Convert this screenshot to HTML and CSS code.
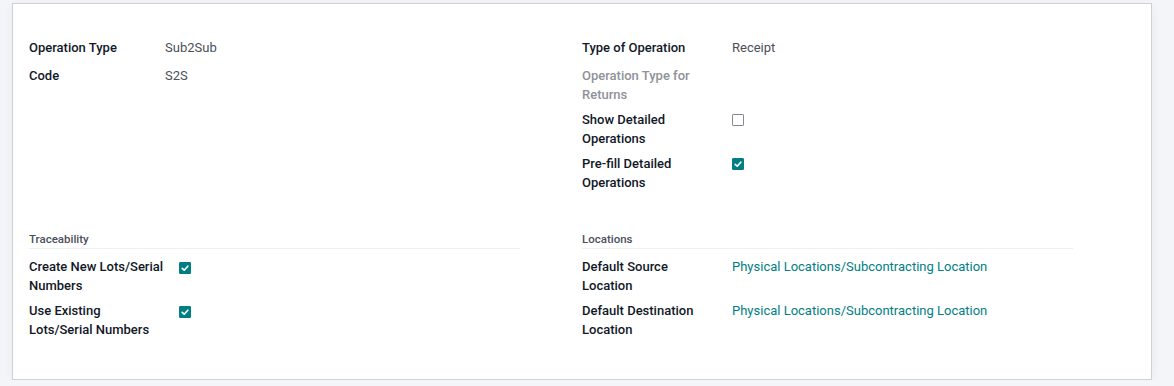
FILE: index.html
```html
<!doctype html>
<html lang="en">
    <head>
        <meta charset="UTF-8" />
        <title>Sub2Sub - Operation Type</title>
        <link rel="stylesheet" href="styles.css">
    </head>
    <body>
        <div class="sheet">
            <div class="group">
                <div class="inner-group left">
                    <div class="row">
                        <div class="label">Operation Type</div>
                        <div class="value">Sub2Sub</div>
                    </div>
                    <div class="row">
                        <div class="label">Code</div>
                        <div class="value">S2S</div>
                    </div>
                </div>
                <div class="inner-group right">
                    <div class="row">
                        <div class="label">Type of Operation</div>
                        <div class="value">Receipt</div>
                    </div>
                    <div class="row">
                        <div class="label muted">Operation Type for Returns</div>
                        <div class="value"></div>
                    </div>
                    <div class="row">
                        <div class="label">Show Detailed Operations</div>
                        <div class="value"><span class="check"></span></div>
                    </div>
                    <div class="row">
                        <div class="label">Pre-fill Detailed Operations</div>
                        <div class="value">
                            <span class="check checked">
                                <svg viewBox="0 0 12 12"><polyline points="3.2,6.4 5.2,8.2 8.8,4.2" /></svg>
                            </span>
                        </div>
                    </div>
                </div>
            </div>

            <div class="group second">
                <div class="inner-group left">
                    <div class="separator">Traceability</div>
                    <div class="row">
                        <div class="label">Create New Lots/Serial Numbers</div>
                        <div class="value">
                            <span class="check checked">
                                <svg viewBox="0 0 12 12"><polyline points="3.2,6.4 5.2,8.2 8.8,4.2" /></svg>
                            </span>
                        </div>
                    </div>
                    <div class="row">
                        <div class="label">Use Existing Lots/Serial Numbers</div>
                        <div class="value">
                            <span class="check checked">
                                <svg viewBox="0 0 12 12"><polyline points="3.2,6.4 5.2,8.2 8.8,4.2" /></svg>
                            </span>
                        </div>
                    </div>
                </div>
                <div class="inner-group right">
                    <div class="separator">Locations</div>
                    <div class="row">
                        <div class="label">Default Source Location</div>
                        <div class="value"><a class="link" href="#">Physical Locations/Subcontracting Location</a></div>
                    </div>
                    <div class="row">
                        <div class="label">Default Destination Location</div>
                        <div class="value"><a class="link" href="#">Physical Locations/Subcontracting Location</a></div>
                    </div>
                </div>
            </div>
        </div>
    </body>
</html>
```

FILE: styles.css
```css
body {
    margin: 0;
    padding: 3px 0 0 12px;
    background-color: #f4f5f8;
    font-family: Roboto, "Liberation Sans", sans-serif;
    font-size: 13px;
    line-height: 19px;
    color: #374151;
}
.sheet {
    box-sizing: border-box;
    width: 1140px;
    height: 377px;
    padding: 34px 16px 0 16px;
    background-color: #ffffff;
    border: 1px solid #cfd0d5;
    box-shadow: 0 2px 10px rgba(0, 0, 0, 0.05);
}
.group {
    display: grid;
    grid-template-columns: 1fr 1fr;
}
.group.second {
    margin-top: 32px;
}
.inner-group {
    padding-right: 62px;
}
.row {
    display: flex;
    min-height: 22px;
    margin-bottom: 6px;
}
.label {
    flex: none;
    box-sizing: border-box;
    font-weight: 500;
    color: #111827;
}
.left .label {
    width: 136px;
    padding-right: 0;
}
.right .label {
    width: 150px;
    padding-right: 18px;
}
.label.muted {
    color: #8f9299;
}
.value {
    flex: 1;
    color: #4b4f57;
}
.link {
    color: #017e84;
    text-decoration: none;
}
.separator {
    height: 18px;
    line-height: 18px;
    font-size: 11.5px;
    font-weight: 500;
    color: #4a4f5c;
    border-bottom: 1px solid #eceef1;
    margin-bottom: 8px;
}
.check {
    display: block;
    box-sizing: border-box;
    width: 12px;
    height: 12px;
    margin-top: 4px;
    border: 1px solid #878a91;
    border-radius: 1px;
}
.left .check {
    margin-top: 5px;
    margin-left: 14px;
}
.check.checked {
    background-color: #017e84;
    border-color: #017e84;
}
.check svg {
    display: block;
    width: 12px;
    height: 12px;
    margin: -1px;
}
.check polyline {
    fill: none;
    stroke: #ffffff;
    stroke-width: 1.7;
    stroke-linecap: round;
    stroke-linejoin: round;
}
```
